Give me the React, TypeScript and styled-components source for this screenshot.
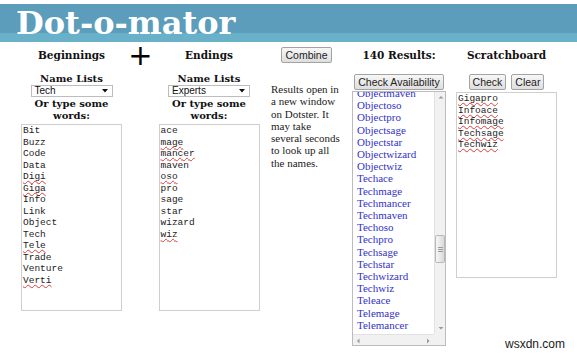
import React from "react";
import styled, { createGlobalStyle } from "styled-components";

const Global = createGlobalStyle`
  html, body { margin: 0; padding: 0; background: #fff; }
  body { width: 577px; height: 354px; overflow: hidden; font-family: "Liberation Serif", serif; }
`;

const beginnings = ["Bit", "Buzz", "Code", "Data", "Digi", "Giga", "Info", "Link", "Object", "Tech", "Tele", "Trade", "Venture", "Verti"];
const flaggedBeginnings = new Set(["Digi", "Giga", "Tele", "Verti"]);
const endings = ["ace", "mage", "mancer", "maven", "oso", "pro", "sage", "star", "wizard", "wiz"];
const flaggedEndings = new Set(["mage", "mancer", "oso", "wiz"]);
const scratch = ["Gigapro", "Infoace", "Infomage", "Techsage", "Techwiz"];
const results = beginnings.flatMap((b) => endings.map((e) => b + e));
const firstVisible = 83;

const Page = styled.div`
  position: relative;
  width: 577px;
  height: 354px;
  padding-top: 4px;
  box-sizing: border-box;
`;

const Header = styled.header`
  height: 38px;
  box-sizing: border-box;
  padding: 3px 0 0 16px;
  background: linear-gradient(#5b9dbb 0 29px, #69b1c9 29px 38px);
`;

const Title = styled.h1`
  margin: 0;
  font-family: "DejaVu Serif", Georgia, serif;
  font-weight: bold;
  font-size: 32px;
  line-height: 32px;
  color: #fff;
  letter-spacing: 0;
`;

const Main = styled.main`
  display: grid;
  grid-template-columns: 101px 37px 100px 93px 94px 111px;
  grid-template-rows: 26px auto;
  padding-left: 21px;
`;

const Heading = styled.div`
  align-self: center;
  text-align: center;
  font-family: "DejaVu Serif", Georgia, serif;
  font-weight: bold;
  font-size: 10.5px;
  color: #111;
`;

const Plus = styled.div`
  align-self: center;
  text-align: center;
  font-family: "DejaVu Sans", sans-serif;
  font-size: 29px;
  line-height: 26px;
  color: #000;
`;

const HeadCell = styled.div<{ $pad?: number }>`
  align-self: center;
  display: flex;
  justify-content: center;
  padding-left: ${(p) => p.$pad ?? 0}px;
`;

const Button = styled.button`
  height: 16px;
  padding: 0 3px;
  box-sizing: border-box;
  border: 1px solid #a3a3a3;
  border-radius: 2px;
  background: linear-gradient(#f7f7f7, #dedede);
  font-family: "Liberation Sans", Arial, sans-serif;
  font-size: 10.5px;
  line-height: 13px;
  color: #222;
`;

const Column = styled.div<{ $top: number; $left?: number }>`
  display: flex;
  flex-direction: column;
  align-items: center;
  padding-top: ${(p) => p.$top}px;
  padding-left: ${(p) => p.$left ?? 0}px;
`;

const Label = styled.div`
  font-family: "DejaVu Serif", Georgia, serif;
  font-weight: bold;
  font-size: 10px;
  line-height: 12px;
  text-align: center;
  color: #111;
`;

const SelectBox = styled.div`
  width: 82px;
  height: 12px;
  box-sizing: border-box;
  border: 1px solid #bdbdbd;
  display: flex;
  align-items: center;
  justify-content: space-between;
  padding: 0 4px 0 3px;
  font-family: "Liberation Sans", Arial, sans-serif;
  font-size: 10px;
  line-height: 10px;
  color: #111;
  margin-bottom: 1px;
`;

const WordBox = styled.div<{ $h: number }>`
  width: 101px;
  height: ${(p) => p.$h}px;
  box-sizing: border-box;
  border: 1px solid #cfcfcf;
  padding: 0 1px;
  font-family: "Liberation Mono", "Courier New", monospace;
  font-size: 9.5px;
  line-height: 11.5px;
  color: #222;
  overflow: hidden;
`;

const Word = styled.div<{ $flag?: boolean }>`
  span {
    text-decoration: ${(p) => (p.$flag ? "underline wavy #e23b3b" : "none")};
    text-decoration-thickness: 1px;
    text-underline-offset: 1px;
    text-decoration-skip-ink: none;
  }
`;

const Note = styled.p`
  margin: 0;
  font-family: "Liberation Serif", Georgia, serif;
  font-size: 11px;
  line-height: 12.3px;
  color: #222;
  align-self: flex-start;
`;

const ButtonRow = styled.div`
  display: flex;
  gap: 5px;
  margin-bottom: 2px;
`;

const ListBox = styled.div`
  width: 94px;
  height: 255px;
  box-sizing: border-box;
  margin-top: 1px;
  border: 1px solid #bcbcbc;
  display: grid;
  grid-template-columns: 1fr 11px;
  grid-template-rows: 1fr 11px;
  background: #fff;
`;

const Viewport = styled.div`
  overflow: hidden;
  padding-left: 4px;
`;

const ResultList = styled.ul`
  list-style: none;
  margin: -5px 0 0;
  padding: 0;
  font-family: "Liberation Serif", Georgia, serif;
  font-size: 11px;
  line-height: 12.2px;
  color: #3232c8;
  white-space: nowrap;
`;

const VScroll = styled.div`
  display: flex;
  flex-direction: column;
  background: #f1f1f1;
  border-left: 1px solid #e2e2e2;
`;

const HScroll = styled.div`
  display: flex;
  background: #f1f1f1;
  border-top: 1px solid #e2e2e2;
`;

const Arrow = styled.div`
  width: 11px;
  height: 11px;
  flex: none;
  display: flex;
  align-items: center;
  justify-content: center;
`;

const Track = styled.div`
  flex: 1;
`;

const Thumb = styled.div<{ $offset: number }>`
  height: 28px;
  margin-top: ${(p) => p.$offset}px;
  box-sizing: border-box;
  border: 1px solid #b8b8b8;
  border-radius: 2px;
  background: linear-gradient(to right, #f6f6f6, #dadada);
  display: flex;
  align-items: center;
  justify-content: center;
`;

const Corner = styled.div`
  background: #f1f1f1;
`;

const Watermark = styled.div`
  position: absolute;
  right: 12px;
  bottom: 3px;
  font-family: "Liberation Sans", Arial, sans-serif;
  font-size: 12px;
  color: #1a1a1a;
`;

const Tri = ({ dir }: { dir: "up" | "down" | "left" | "right" }) => {
  const pts = {
    up: "0.5,3.5 3,1 5.5,3.5",
    down: "0.5,1 3,3.5 5.5,1",
    left: "3.5,0.5 1,3 3.5,5.5",
    right: "1,0.5 3.5,3 1,5.5",
  }[dir];
  const w = dir === "up" || dir === "down" ? 6 : 5;
  const h = dir === "up" || dir === "down" ? 5 : 6;
  return (
    <svg width={w} height={h} viewBox={`0 0 ${w} ${h}`}>
      <polygon points={pts} fill="#9a9a9a" />
    </svg>
  );
};

const Select = ({ value }: { value: string }) => (
  <SelectBox>
    <span>{value}</span>
    <svg width="6" height="4" viewBox="0 0 6 4">
      <polygon points="0,0 6,0 3,3.5" fill="#111" />
    </svg>
  </SelectBox>
);

const Words = ({ items, flagged, h }: { items: string[]; flagged: Set<string>; h: number }) => (
  <WordBox $h={h}>
    {items.map((w) => (
      <Word key={w} $flag={flagged.has(w)}>
        <span>{w}</span>
      </Word>
    ))}
  </WordBox>
);

export default function App() {
  return (
    <Page>
      <Global />
      <Header>
        <Title>Dot-o-mator</Title>
      </Header>
      <Main>
        <Heading>Beginnings</Heading>
        <Plus>+</Plus>
        <Heading>Endings</Heading>
        <HeadCell $pad={2}>
          <Button>Combine</Button>
        </HeadCell>
        <Heading>140 Results:</Heading>
        <Heading style={{ paddingLeft: 10 }}>Scratchboard</Heading>

        <Column $top={5}>
          <Label>Name Lists</Label>
          <Select value="Tech" />
          <Label>
            Or type some
            <br />
            words:
          </Label>
          <div style={{ height: 2 }} />
          <Words items={beginnings} flagged={flaggedBeginnings} h={187} />
        </Column>
        <div />
        <Column $top={5}>
          <Label>Name Lists</Label>
          <Select value="Experts" />
          <Label>
            Or type some
            <br />
            words:
          </Label>
          <div style={{ height: 2 }} />
          <Words items={endings} flagged={flaggedEndings} h={187} />
        </Column>
        <Column $top={15} $left={12}>
          <Note>
            Results open in
            <br />a new window
            <br />on Dotster. It
            <br />may take
            <br />several seconds
            <br />to look up all
            <br />the names.
          </Note>
        </Column>
        <Column $top={6}>
          <Button>Check Availability</Button>
          <ListBox>
            <Viewport>
              <ResultList>
                {results.slice(firstVisible, firstVisible + 21).map((r) => (
                  <li key={r}>{r}</li>
                ))}
              </ResultList>
            </Viewport>
            <VScroll>
              <Arrow>
                <Tri dir="up" />
              </Arrow>
              <Track>
                <Thumb $offset={132}>
                  <svg width="5" height="5" viewBox="0 0 5 5">
                    <path d="M0 0.5H5M0 2.5H5M0 4.5H5" stroke="#9c9c9c" strokeWidth="1" />
                  </svg>
                </Thumb>
              </Track>
              <Arrow>
                <Tri dir="down" />
              </Arrow>
            </VScroll>
            <HScroll>
              <Arrow>
                <Tri dir="left" />
              </Arrow>
              <Track />
              <Arrow>
                <Tri dir="right" />
              </Arrow>
            </HScroll>
            <Corner />
          </ListBox>
        </Column>
        <Column $top={6} $left={10}>
          <ButtonRow>
            <Button>Check</Button>
            <Button>Clear</Button>
          </ButtonRow>
          <Words items={scratch} flagged={new Set(scratch)} h={186} />
        </Column>
      </Main>
      <Watermark>wsxdn.com</Watermark>
    </Page>
  );
}
